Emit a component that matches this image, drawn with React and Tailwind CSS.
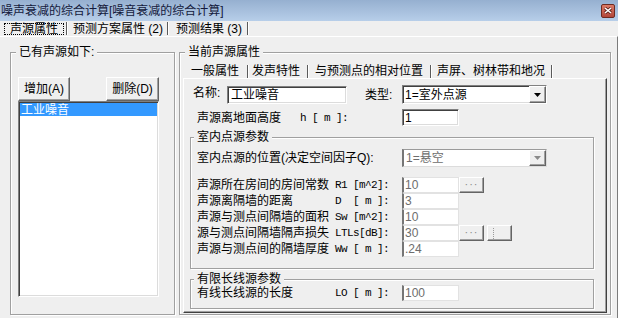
import React from "react";

const raised =
  "border border-t-white border-l-white border-r-[#646464] border-b-[#646464] shadow-[inset_-1px_-1px_0_#a0a0a0] bg-[#efefef]";
const etched = "border border-[#a0a0a0] shadow-[inset_1px_1px_0_#fff,1px_1px_0_#fff]";
const sunken =
  "border border-t-[#808080] border-l-[#808080] border-r-white border-b-white shadow-[inset_1px_1px_0_#404040,inset_-1px_-1px_0_#dcdcdc] bg-white";
const dimField =
  "border border-[#e2e2e2] border-l-2 border-l-[#767676] bg-white text-[#6d6d6d]";
const mono = "font-['Liberation_Mono',monospace] text-[11px] tracking-[-0.6px] whitespace-pre";

function Legend({ children, className = "" }) {
  return (
    <div className={`-mt-[7px] px-[3px] bg-[#efefef] self-start leading-[12px] ${className}`}>
      {children}
    </div>
  );
}

function Arrow({ color }) {
  return (
    <svg width="7" height="4" viewBox="0 0 7 4">
      <polygon points="0,0 7,0 3.5,4" fill={color} />
    </svg>
  );
}

function Select({ value, disabled, className = "" }) {
  return (
    <div
      className={`w-[145px] flex items-stretch ${
        disabled
          ? "border border-[#dcdcdc] border-l-2 border-l-[#767676] border-t-[#9a9a9a] bg-white text-[#6d6d6d]"
          : sunken
      } ${className}`}
    >
      <span className="flex-1 flex items-center pl-[2px]">{value}</span>
      <span className={`w-[17px] flex items-center justify-center ${raised}`}>
        <Arrow color={disabled ? "#8a8a8a" : "#000"} />
      </span>
    </div>
  );
}

function DotButton() {
  return (
    <span className={`w-[25px] h-[16px] flex items-start justify-center pt-[1px] text-[#8a8a8a] text-[11px] leading-[10px] tracking-[1px] ${raised}`}>
      ···
    </span>
  );
}

function ParamRow({ label, code, value, children }) {
  return (
    <div className="h-[16px] flex items-center pl-[6px]">
      <span className="w-[138px] whitespace-nowrap">{label}</span>
      <span className={`w-[67px] ${mono}`}>{code}</span>
      <span className={`w-[57px] h-[16px] flex items-center pl-[1px] ${dimField}`}>{value}</span>
      {children}
    </div>
  );
}

export default function App() {
  return (
    <div className="w-[618px] h-[318px] overflow-hidden bg-[#efefef] flex flex-col text-[12px] leading-[12px] text-black font-['Liberation_Sans','Noto_Sans_CJK_SC',sans-serif]">
      {/* Title bar */}
      <div className="h-[21px] shrink-0 flex items-center justify-between pl-[1px] pr-[3px] bg-gradient-to-b from-[#96b0d0] to-[#b7cee9]">
        <span className="text-[#141a3c]">噪声衰减的综合计算[噪音衰减的综合计算]</span>
        <span className="w-[14px] h-[14px] flex items-center justify-center rounded-[2px] border border-[#6e2a20] bg-gradient-to-b from-[#dc7a66] to-[#b2463a]">
          <svg width="8" height="7" viewBox="0 0 8 7">
            <path d="M1 1 L7 6 M7 1 L1 6" stroke="#5a1d16" strokeWidth="3" />
            <path d="M1 1 L7 6 M7 1 L1 6" stroke="#fff" strokeWidth="1.6" />
          </svg>
        </span>
      </div>

      {/* Top tabs */}
      <div className="h-[15px] shrink-0 flex items-center pl-[4px]">
        <span className="w-[60px] h-[12px] flex items-center justify-center border border-dotted border-black">声源属性</span>
        <span className="ml-[2px] w-[2px] h-[13px] border-l border-l-[#5a5a5a] border-r border-r-white" />
        <span className="ml-[5px] w-[94px] whitespace-nowrap">预测方案属性 (2)</span>
        <span className="w-[2px] h-[13px] border-l border-l-[#5a5a5a] border-r border-r-white" />
        <span className="ml-[7px] w-[71px] whitespace-nowrap">预测结果 (3)</span>
        <span className="w-[2px] h-[13px] border-l border-l-[#5a5a5a] border-r border-r-white" />
      </div>

      {/* Panel */}
      <div className="flex-1 flex items-start border-t border-t-white border-r border-r-[#7b7b7b] pl-[10px] pt-[15px]">
        {/* Left group */}
        <div className={`w-[165px] h-[263px] flex flex-col ${etched}`}>
          <Legend className="ml-[5px]">已有声源如下:</Legend>
          <div className="mt-[19px] ml-[7px] flex">
            <span className={`w-[52px] h-[24px] flex items-center justify-center ${raised}`}>增加(A)</span>
            <span className={`ml-[36px] w-[53px] h-[24px] flex items-center justify-center ${raised}`}>删除(D)</span>
          </div>
          <div className={`ml-[7px] w-[141px] h-[196px] pt-[1px] pl-[1px] ${sunken}`}>
            <div className="h-[13px] mr-[1px] bg-[#3399ff] text-white flex items-center pl-[1px]">工业噪音</div>
          </div>
        </div>

        {/* Right group */}
        <div className={`ml-[4px] w-[432px] h-[263px] flex flex-col ${etched}`}>
          <Legend className="ml-[5px]">当前声源属性</Legend>

          {/* Inner tabs */}
          <div className="mt-[4px] ml-[3px] h-[16px] flex items-end">
            <span className="ml-[8px] pb-[1px]">一般属性</span>
            <span className="ml-[8px] w-[2px] h-[13px] border-l border-l-[#5a5a5a] border-r border-r-white" />
            <span className="ml-[3px] pb-[1px]">发声特性</span>
            <span className="ml-[7px] w-[2px] h-[13px] border-l border-l-[#5a5a5a] border-r border-r-white" />
            <span className="ml-[6px] pb-[1px]">与预测点的相对位置</span>
            <span className="ml-[7px] w-[2px] h-[13px] border-l border-l-[#5a5a5a] border-r border-r-white" />
            <span className="ml-[5px] pb-[1px]">声屏、树林带和地况</span>
            <span className="ml-[6px] w-[2px] h-[13px] border-l border-l-[#5a5a5a] border-r border-r-white" />
          </div>

          {/* Tab page */}
          <div className="ml-[3px] w-[424px] h-[235px] flex flex-col border border-t-white border-l-white border-r-[#404040] border-b-[#404040] shadow-[inset_-1px_-1px_0_#a0a0a0]">
            <div className="mt-[6px] h-[19px] flex items-center pl-[9px]">
              <span className="w-[34px] -mt-[3px]">名称:</span>
              <span className={`w-[120px] h-[18px] flex items-center pl-[3px] ${sunken}`}>工业噪音</span>
              <span className="ml-[18px] w-[37px]">类型:</span>
              <Select value="1=室外点源" className="h-[19px]" />
            </div>

            <div className="mt-[5px] h-[17px] flex items-center pl-[13px]">
              <span className="w-[103px]">声源离地面高度</span>
              <span className={`w-[102px] ${mono}`}>h [ m ]:</span>
              <span className={`w-[57px] h-[17px] flex items-center pl-[2px] ${sunken}`}>1</span>
            </div>

            {/* 室内点源参数 */}
            <div className={`mt-[11px] ml-[6px] w-[404px] h-[132px] flex flex-col ${etched}`}>
              <Legend className="ml-[3px]">室内点源参数</Legend>
              <div className="mt-[6px] h-[18px] flex items-center pl-[6px]">
                <span className="w-[205px] whitespace-nowrap">室内点源的位置(决定空间因子Q):</span>
                <Select value="1=悬空" disabled className="h-[18px]" />
              </div>
              <div className="mt-[10px] flex flex-col">
                <ParamRow label="声源所在房间的房间常数" code="R1 [m^2]:" value="10">
                  <DotButton />
                </ParamRow>
                <ParamRow label="声源离隔墙的距离" code="D  [ m ]:" value="3" />
                <ParamRow label="声源与测点间隔墙的面积" code="Sw [m^2]:" value="10" />
                <ParamRow label="源与测点间隔墙隔声损失" code="LTLs[dB]:" value="30">
                  <DotButton />
                  <span className={`ml-[3px] w-[25px] h-[16px] flex items-center pl-[5px] ${raised}`}>
                    <span className="h-[11px] border-l border-dotted border-l-[#9a9a9a]" />
                  </span>
                </ParamRow>
                <ParamRow label="声源与测点间的隔墙厚度" code="Ww [ m ]:" value=".24" />
              </div>
            </div>

            {/* 有限长线源参数 */}
            <div className={`mt-[10px] ml-[6px] w-[404px] h-[30px] flex flex-col ${etched}`}>
              <Legend className="ml-[3px]">有限长线源参数</Legend>
              <ParamRow label="有线长线源的长度" code="LO [ m ]:" value="100" />
            </div>
          </div>
        </div>
      </div>
    </div>
  );
}
